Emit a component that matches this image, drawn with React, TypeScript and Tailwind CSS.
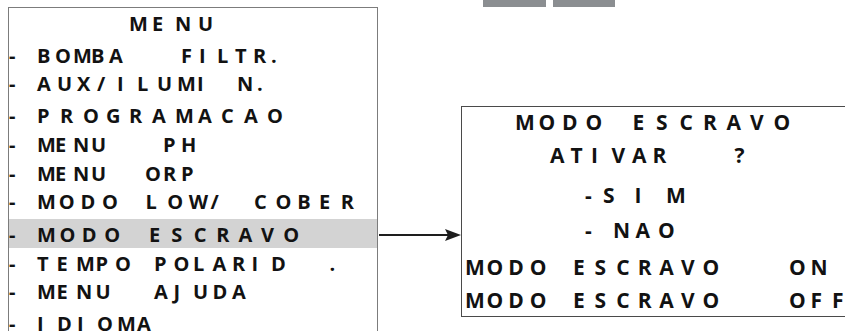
const LEFT_ROWS = [
  { h: "h-[32px]", dash: false, cell: "w-[23px]", text: "    MENU", active: false },
  { h: "h-[28px]", dash: true, cell: "w-[18px]", text: "BOMBA   FILTR.", active: false },
  { h: "h-[32px]", dash: true, cell: "w-[20px]", text: "AUX/ILUMI N.", active: false },
  { h: "h-[29px]", dash: true, cell: "w-[23px]", text: "PROGRAMACAO", active: false },
  { h: "h-[29px]", dash: true, cell: "w-[18px]", text: "MENU   PH", active: false },
  { h: "h-[28px]", dash: true, cell: "w-[18px]", text: "MENU  ORP", active: false },
  { h: "h-[33px]", dash: true, cell: "w-[21.7px]", text: "MODO LOW/ COBER", active: false },
  { h: "h-[29px]", dash: true, cell: "w-[22.4px]", text: "MODO ESCRAVO", active: true },
  { h: "h-[28px]", dash: true, cell: "w-[19.5px]", text: "TEMPO POLARID  .", active: false },
  { h: "h-[32px]", dash: true, cell: "w-[19.5px]", text: "MENU  AJUDA", active: false },
  { h: "h-[29px]", dash: true, cell: "w-[20px]", text: "IDIOMA", active: false },
];

const RIGHT_ROWS = [
  { h: "h-[33px]", pad: "pl-[53px]", dash: "", cell: "w-[23.5px]", text: "MODO ESCRAVO" },
  { h: "h-[40px]", pad: "pl-[88px]", dash: "", cell: "w-[20.5px]", text: "ATIVAR   ?" },
  { h: "h-[35px]", pad: "pl-[123px]", dash: "w-[18px]", cell: "w-[15.75px]", text: "S I M" },
  { h: "h-[37px]", pad: "pl-[123px]", dash: "w-[28px]", cell: "w-[22.5px]", text: "NAO" },
  { h: "h-[33px]", pad: "pl-[3px]", dash: "", cell: "w-[21.6px]", text: "MODO ESCRAVO   ON" },
  { h: "h-[31px]", pad: "pl-[3px]", dash: "", cell: "w-[21.6px]", text: "MODO ESCRAVO   OFF" },
];

// one glyph per LCD cell, left aligned
function Cells({ text, cell }: { text: string; cell: string }) {
  return (
    <span className="flex">
      {Array.from(text).map((ch, i) => (
        <span key={i} className={`${cell} shrink-0`}>
          {ch === " " ? "\u00a0" : ch}
        </span>
      ))}
    </span>
  );
}

function Arrow() {
  return (
    <svg width="83" height="14" viewBox="0 0 83 14" className="block">
      <line x1="1" y1="7" x2="70" y2="7" stroke="#1e1e1e" strokeWidth="1.8" />
      <path d="M67 1 L83 7 L67 13 L70 7 Z" fill="#1e1e1e" />
    </svg>
  );
}

export default function App() {
  return (
    <div className="w-[845px] h-[331px] overflow-hidden bg-white flex items-start font-['Open_Sans',sans-serif] font-bold text-[#121212]">
      {/* main menu */}
      <div className="ml-[8px] mt-[7px] w-[370px] shrink-0 border border-[#7c7c7c] text-[20px]">
        {LEFT_ROWS.map((r, i) => (
          <div key={i} className={`${r.h} flex items-start ${r.active ? "bg-[#d3d3d3]" : ""}`}>
            <div className="flex pt-[5.5px] leading-[20px]">
              <span className="w-[28px] shrink-0">{r.dash ? "-" : "\u00a0"}</span>
              <Cells text={r.text} cell={r.cell} />
            </div>
          </div>
        ))}
      </div>

      <div className="w-[83px] shrink-0 mt-[228px]">
        <Arrow />
      </div>

      {/* sub screen */}
      <div className="flex flex-col shrink-0">
        <div className="h-[7px] flex gap-[7px] pl-[22px]">
          <div className="w-[63px] bg-[#8b8e91]" />
          <div className="w-[62px] bg-[#8b8e91]" />
        </div>
        <div className="mt-[99px] w-[420px] h-[211px] border border-[#4a4a4a] text-[21px]">
          {RIGHT_ROWS.map((r, i) => (
            <div key={i} className={`${r.h} ${r.pad} flex items-start`}>
              <div className="flex pt-[5px] leading-[20px]">
                {r.dash && <span className={`${r.dash} shrink-0`}>-</span>}
                <Cells text={r.text} cell={r.cell} />
              </div>
            </div>
          ))}
        </div>
      </div>
    </div>
  );
}
